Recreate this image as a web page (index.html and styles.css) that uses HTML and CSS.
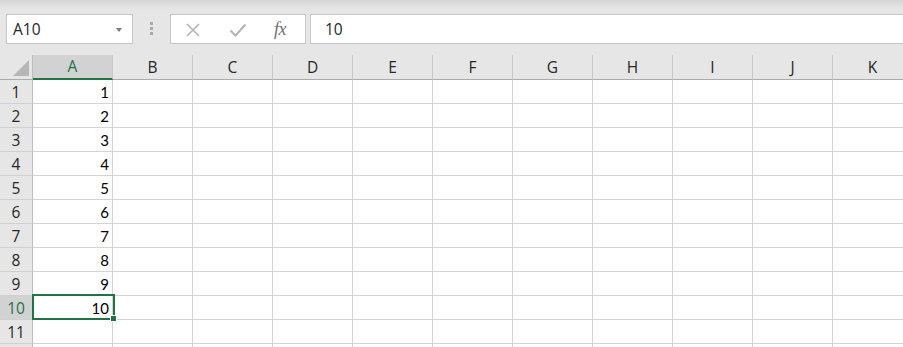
FILE: index.html
```html
<!DOCTYPE html>
<html>
<head>
<meta charset="utf-8">
<link rel="stylesheet" href="styles.css">
</head>
<body>
<div class="toolbar">
  <div class="namebox"><span class="nb-text">A10</span><span class="nb-arrow"></span></div>
  <div class="grip"><i></i><i></i><i></i></div>
  <div class="fbuttons">
    <svg class="ic-x" width="16" height="16" viewBox="0 0 16 16"><path d="M2 2 L14 14 M14 2 L2 14" stroke="#b3b3b3" stroke-width="1.6" fill="none"/></svg>
    <svg class="ic-check" width="18" height="16" viewBox="0 0 18 16"><path d="M1.5 8.5 L6.5 13.5 L16.5 2.5" stroke="#b3b3b3" stroke-width="2" fill="none"/></svg>
    <span class="fx">fx</span>
  </div>
  <div class="finput">10</div>
</div>
<div class="sheet">
  <div class="corner"><span class="tri"></span></div>
  <div class="ch sel">A</div><div class="ch">B</div><div class="ch">C</div><div class="ch">D</div><div class="ch">E</div><div class="ch">F</div><div class="ch">G</div><div class="ch">H</div><div class="ch">I</div><div class="ch">J</div><div class="ch">K</div>

  <div class="rh">1</div><div class="c num">1</div><div class="c"></div><div class="c"></div><div class="c"></div><div class="c"></div><div class="c"></div><div class="c"></div><div class="c"></div><div class="c"></div><div class="c"></div><div class="c"></div>
  <div class="rh">2</div><div class="c num">2</div><div class="c"></div><div class="c"></div><div class="c"></div><div class="c"></div><div class="c"></div><div class="c"></div><div class="c"></div><div class="c"></div><div class="c"></div><div class="c"></div>
  <div class="rh">3</div><div class="c num">3</div><div class="c"></div><div class="c"></div><div class="c"></div><div class="c"></div><div class="c"></div><div class="c"></div><div class="c"></div><div class="c"></div><div class="c"></div><div class="c"></div>
  <div class="rh">4</div><div class="c num">4</div><div class="c"></div><div class="c"></div><div class="c"></div><div class="c"></div><div class="c"></div><div class="c"></div><div class="c"></div><div class="c"></div><div class="c"></div><div class="c"></div>
  <div class="rh">5</div><div class="c num">5</div><div class="c"></div><div class="c"></div><div class="c"></div><div class="c"></div><div class="c"></div><div class="c"></div><div class="c"></div><div class="c"></div><div class="c"></div><div class="c"></div>
  <div class="rh">6</div><div class="c num">6</div><div class="c"></div><div class="c"></div><div class="c"></div><div class="c"></div><div class="c"></div><div class="c"></div><div class="c"></div><div class="c"></div><div class="c"></div><div class="c"></div>
  <div class="rh">7</div><div class="c num">7</div><div class="c"></div><div class="c"></div><div class="c"></div><div class="c"></div><div class="c"></div><div class="c"></div><div class="c"></div><div class="c"></div><div class="c"></div><div class="c"></div>
  <div class="rh">8</div><div class="c num">8</div><div class="c"></div><div class="c"></div><div class="c"></div><div class="c"></div><div class="c"></div><div class="c"></div><div class="c"></div><div class="c"></div><div class="c"></div><div class="c"></div>
  <div class="rh">9</div><div class="c num">9</div><div class="c"></div><div class="c"></div><div class="c"></div><div class="c"></div><div class="c"></div><div class="c"></div><div class="c"></div><div class="c"></div><div class="c"></div><div class="c"></div>
  <div class="rh sel">10</div><div class="c num active">10<span class="selbox"></span><span class="handle"></span></div><div class="c"></div><div class="c"></div><div class="c"></div><div class="c"></div><div class="c"></div><div class="c"></div><div class="c"></div><div class="c"></div><div class="c"></div><div class="c"></div>
  <div class="rh">11</div><div class="c"></div><div class="c"></div><div class="c"></div><div class="c"></div><div class="c"></div><div class="c"></div><div class="c"></div><div class="c"></div><div class="c"></div><div class="c"></div><div class="c"></div>
  <div class="rh"></div><div class="c"></div><div class="c"></div><div class="c"></div><div class="c"></div><div class="c"></div><div class="c"></div><div class="c"></div><div class="c"></div><div class="c"></div><div class="c"></div><div class="c"></div>
</div>
</body>
</html>
```

FILE: styles.css
```css
html, body {
  margin: 0;
  padding: 0;
  background: #e6e6e6;
  overflow: hidden;
  width: 903px;
  height: 347px;
}
body {
  font-family: "Open Sans", "Noto Sans", sans-serif;
  color: #262626;
}
.toolbar {
  height: 55px;
  box-sizing: border-box;
  padding: 14px 0 0 6px;
  display: flex;
  align-items: flex-start;
  background: linear-gradient(#d3d3d3 0px, #dedede 4px, #e6e6e6 10px, #e6e6e6 100%);
  width: 910px;
}
.namebox {
  width: 127px;
  height: 30px;
  box-sizing: border-box;
  background: #fff;
  border: 1px solid #c6c6c6;
  display: flex;
  align-items: center;
  justify-content: space-between;
  padding: 0 10px 0 6px;
}
.nb-text {
  font-size: 15.5px;
  color: #262626;
}
.nb-arrow {
  width: 0;
  height: 0;
  border-left: 3.5px solid transparent;
  border-right: 3.5px solid transparent;
  border-top: 4px solid #7a7a7a;
  margin-top: 1px;
}
.grip {
  margin: 8px 0 0 17px;
  width: 3px;
  display: flex;
  flex-direction: column;
  gap: 2px;
}
.grip i {
  display: block;
  width: 3px;
  height: 3px;
  background: #a9a9a9;
}
.fbuttons {
  margin-left: 17px;
  width: 136px;
  height: 30px;
  box-sizing: border-box;
  background: #fff;
  border: 1px solid #c6c6c6;
  display: flex;
  align-items: center;
  padding-left: 14px;
}
.ic-x { margin-top: 1px; }
.ic-check { margin-left: 28px; margin-top: 1px; }
.fx {
  margin-left: 27px;
  font-family: "Liberation Serif", serif;
  font-style: italic;
  font-size: 18px;
  color: #6e6e6e;
  letter-spacing: -0.5px;
}
.finput {
  margin-left: 4px;
  flex: 1;
  height: 30px;
  box-sizing: border-box;
  background: #fff;
  border: 1px solid #c6c6c6;
  padding-left: 14px;
  font-size: 15.5px;
  line-height: 28px;
  color: #262626;
}
.sheet {
  display: grid;
  grid-template-columns: 33px repeat(11, 80px);
  grid-template-rows: 25px;
  grid-auto-rows: 24px;
  background: #fff;
  width: 913px;
}
.corner {
  background: #e6e6e6;
  border-right: 1px solid #bdbdbd;
  border-bottom: 1px solid #ababab;
  box-sizing: border-box;
  position: relative;
}
.tri {
  position: absolute;
  right: 3px;
  bottom: 3px;
  width: 0;
  height: 0;
  border-left: 16px solid transparent;
  border-bottom: 16px solid #b6b6b6;
}
.ch {
  background: #e6e6e6;
  border-right: 1px solid #c8c8c8;
  border-bottom: 1px solid #ababab;
  box-sizing: border-box;
  text-align: center;
  font-size: 15.5px;
  line-height: 24px;
  color: #262626;
}
.ch.sel {
  background: #d2d2d2;
  color: #217346;
  border-bottom: 2px solid #217346;
  line-height: 23px;
}
.rh {
  background: #e6e6e6;
  border-right: 1px solid #bdbdbd;
  border-bottom: 1px solid #d0d0d0;
  box-sizing: border-box;
  text-align: center;
  font-size: 15.5px;
  line-height: 24px;
  color: #262626;
}
.rh.sel {
  background: #d2d2d2;
  color: #217346;
}
.c {
  border-right: 1px solid #d4d4d4;
  border-bottom: 1px solid #d4d4d4;
  box-sizing: border-box;
  background: #fff;
}
.num {
  font-family: "Lato", "Liberation Sans", sans-serif;
  font-size: 15px;
  text-align: right;
  padding-right: 3px;
  line-height: 25px;
  color: #000;
}
.active {
  position: relative;
}
.selbox {
  position: absolute;
  left: -1px;
  top: -2px;
  width: 83px;
  height: 26px;
  box-sizing: border-box;
  border: 2px solid #217346;
  pointer-events: none;
}
.handle {
  position: absolute;
  left: 77px;
  top: 19px;
  width: 5px;
  height: 5px;
  background: #217346;
  border: 1px solid #fff;
}
```
